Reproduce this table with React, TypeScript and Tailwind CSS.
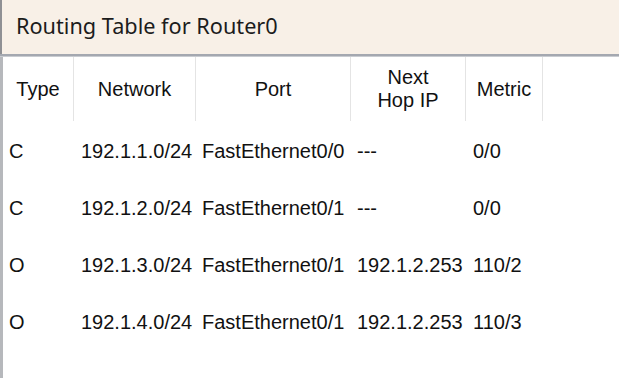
import React from "react";

type Route = {
  type: string;
  network: string;
  port: string;
  nextHop: string;
  metric: string;
};

const routes: Route[] = [
  { type: "C", network: "192.1.1.0/24", port: "FastEthernet0/0", nextHop: "---", metric: "0/0" },
  { type: "C", network: "192.1.2.0/24", port: "FastEthernet0/1", nextHop: "---", metric: "0/0" },
  { type: "O", network: "192.1.3.0/24", port: "FastEthernet0/1", nextHop: "192.1.2.253", metric: "110/2" },
  { type: "O", network: "192.1.4.0/24", port: "FastEthernet0/1", nextHop: "192.1.2.253", metric: "110/3" },
];

const cols = "grid grid-cols-[71px_122px_155px_115px_77px_1fr]";

export default function App() {
  return (
    <div className="w-[619px] h-[378px] overflow-hidden bg-white flex flex-col">
      {/* window title */}
      <div className="h-[54px] shrink-0 flex items-center pl-[14px] pb-[2px] bg-[#f8f0e7] border-l-2 border-[#8f9094] font-['Noto_Sans',sans-serif] text-[21.7px] text-[#1c1c1c]">
        Routing Table for Router0
      </div>
      <div className="h-[3px] shrink-0 bg-[#a4a8b0] border-b border-[#c9ccd1]" />

      <div className="flex-1 border-l-[3px] border-[#b6b8bc] font-['Liberation_Sans',Arial,sans-serif] text-[20px] leading-[23px] text-[#111]">
        <div className={`${cols} h-[66px]`}>
          {["Type", "Network", "Port", "Next\nHop IP", "Metric"].map((h) => (
            <div key={h} className="flex items-center justify-center text-center whitespace-pre-line border-r border-[#e4e4e4] mb-[2px]">
              {h}
            </div>
          ))}
          <div />
        </div>

        {routes.map((r) => (
          <div key={r.network} className={`${cols} h-[57px] items-center`}>
            <div className="pl-[6px]">{r.type}</div>
            <div className="pl-[7px]">{r.network}</div>
            <div className="pl-[6px]">{r.port}</div>
            <div className="pl-[6px]">{r.nextHop}</div>
            <div className="pl-[7px]">{r.metric}</div>
            <div />
          </div>
        ))}
      </div>
    </div>
  );
}
